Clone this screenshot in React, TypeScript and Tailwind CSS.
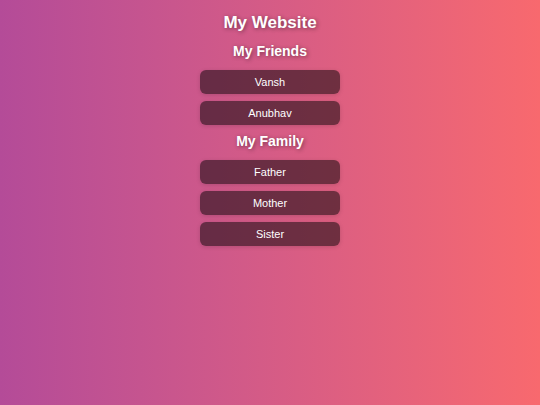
export default function App() {
  const friends = ["Vansh", "Anubhav"];
  const family = ["Father", "Mother", "Sister"];
  const Btn = ({ label }: { label: string }) => (
    <div className="w-[140px] h-[24px] rounded-[6px] bg-black/50 shadow-[0_1px_4px_rgba(0,0,0,0.15)] flex items-center justify-center text-white text-[11px]">
      {label}
    </div>
  );
  return (
    <div
      className="w-[540px] h-[405px] bg-gradient-to-r from-[#b44b98] to-[#f8696e] flex flex-col items-center pt-[13px]"
      style={{ fontFamily: '"Liberation Sans", Arial, sans-serif' }}
    >
      <h1 className="text-[17px] leading-[20px] font-bold text-white [text-shadow:1px_1px_4px_rgba(0,0,0,0.45)]">
        My Website
      </h1>
      <h2 className="mt-[10px] text-[14px] leading-[17px] font-bold text-white [text-shadow:1px_1px_4px_rgba(0,0,0,0.45)]">
        My Friends
      </h2>
      <div className="mt-[10px] flex flex-col gap-[7px]">
        {friends.map((f) => (
          <Btn key={f} label={f} />
        ))}
      </div>
      <h2 className="mt-[8px] text-[14px] leading-[17px] font-bold text-white [text-shadow:1px_1px_4px_rgba(0,0,0,0.45)]">
        My Family
      </h2>
      <div className="mt-[10px] flex flex-col gap-[7px]">
        {family.map((f) => (
          <Btn key={f} label={f} />
        ))}
      </div>
    </div>
  );
}
